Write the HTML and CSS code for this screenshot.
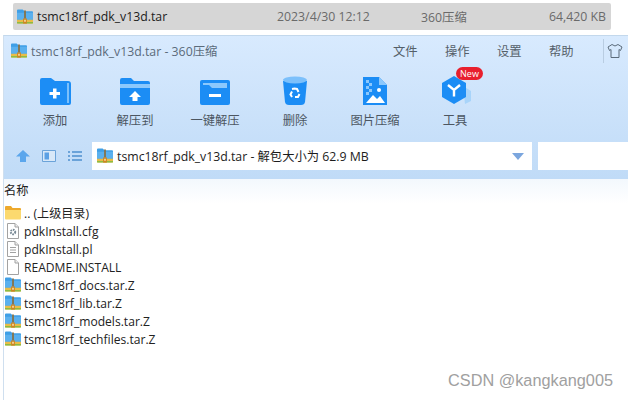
FILE: index.html
```html
<!DOCTYPE html>
<html lang="zh">
<head>
<meta charset="utf-8">
<title>360压缩</title>
<link rel="stylesheet" href="styles.css">
</head>
<body>
<svg class="defs" width="0" height="0">
  <symbol id="arc" viewBox="0 0 17 17">
    <path d="M0 1.500Q0 .5 1 .5H6L8 2.500H16Q17 2.500 17 3.500V13H0Z" fill="#3f9fe6"/>
    <path d="M0 4H17V11.500H0Z" fill="#5ab0ee"/>
    <path d="M0 11.500H17V14.500Q17 15.500 16 15.500H1Q0 15.500 0 14.500Z" fill="#e8bc48"/>
    <path d="M0 13.800H17V14.500Q17 15.500 16 15.500H1Q0 15.500 0 14.500Z" fill="#8cbc44"/>
    <path d="M7.500 1.500H9.500V10H7.500Z" fill="#85754f"/>
    <path d="M6.500 10H10.500V15.500H6.500Z" fill="#cf8420"/>
    <path d="M7.800 11.500H9.200V13.500H7.800Z" fill="#fff3c8"/>
  </symbol>
  <symbol id="doc" viewBox="0 0 16 16">
    <path d="M2.500.5H10L13.500 4V15.500H2.500Z" fill="#fff" stroke="#a2a2a2"/>
    <path d="M10 .5V4H13.500" fill="#eee" stroke="#a2a2a2"/>
  </symbol>
</svg>

<div class="selected">
  <svg class="ic16"><use href="#arc"/></svg>
  <span class="sel-name">tsmc18rf_pdk_v13d.tar</span>
  <span class="sel-date">2023/4/30 12:12</span>
  <span class="sel-type">360压缩</span>
  <span class="sel-size">64,420 KB</span>
</div>

<main class="window">
  <header class="head">
    <div class="titlebar">
      <svg class="ic16"><use href="#arc"/></svg>
      <span class="title">tsmc18rf_pdk_v13d.tar - 360压缩</span>
      <nav class="menu">
        <span class="menu-item">文件</span>
        <span class="menu-item">操作</span>
        <span class="menu-item">设置</span>
        <span class="menu-item">帮助</span>
      </nav>
      <span class="sep"></span>
      <svg class="shirt" viewBox="0 0 16 16"><path d="M5 1.500 1 4l1.500 3.500L4 6.500V14.500H12V6.500L13.500 7.500 15 4 11 1.500Q8 4.500 5 1.500Z" fill="none" stroke="#5b6b7b"/></svg>
    </div>
    <div class="tools">
      <div class="tool">
        <svg class="tool-ic" viewBox="0 0 32 30"><path d="M1 3Q1 1 3 1H12L16 4H29Q32 4 32 7V26Q32 28 30 28H3Q1 28 1 26Z" fill="#1c8df5"/><path d="M28 6H30V26H28Z" fill="#7cc0fb"/><path d="M14 11.500H17.500V15H21V18H17.500V21.500H14V18H10.500V15H14Z" fill="#fff"/></svg>
        <span class="tool-label">添加</span>
      </div>
      <div class="tool">
        <svg class="tool-ic" viewBox="0 0 32 30"><path d="M1 3Q1 1 3 1H12L15 4H29Q31 4 31 6V26Q31 28 29 28H3Q1 28 1 26Z" fill="#1c8df5"/><path d="M1 7H31V11H1Z" fill="#8cc8fc"/><path d="M16 14 22 20H18.500V24H13.500V20H10Z" fill="#fff"/></svg>
        <span class="tool-label">解压到</span>
      </div>
      <div class="tool">
        <svg class="tool-ic" viewBox="0 0 32 30"><path d="M1 5Q1 3 3 3H29Q31 3 31 5V26Q31 28 29 28H3Q1 28 1 26Z" fill="#1c8df5"/><path d="M4 6H28V11H13L10 8H4Z" fill="#8cc8fc"/><path d="M10 17H22V20H10Z" fill="#fff"/></svg>
        <span class="tool-label">一键解压</span>
      </div>
      <div class="tool">
        <svg class="tool-ic" viewBox="0 0 32 30"><path d="M4 4H28L26 25Q25.500 28 22 28H10Q6.500 28 6 25Z" fill="#1c8df5"/><ellipse cx="16" cy="3" rx="12" ry="3.500" fill="#7cc0fb"/><path d="M13 12 15.500 11.500 18 12 19.500 15M20.500 17 19 20H16M13 20 11.500 17.500 13 14.500" fill="none" stroke="#fff" stroke-width="2"/></svg>
        <span class="tool-label">删除</span>
      </div>
      <div class="tool">
        <svg class="tool-ic" viewBox="0 0 32 30"><path d="M4 0H20L28 8V28H4Z" fill="#1c8df5"/><path d="M20 0 28 8H20Z" fill="#8cc8fc"/><path d="M7 3H10V6H7ZM10 6H13V9H10ZM7 9H10V12H7ZM10 12H13V15H10ZM7 15H10V18H7Z" fill="#8cc8fc"/><circle cx="20" cy="13" r="2" fill="#fff"/><path d="M7 26 14 18 18 22 21 19 26 26Z" fill="#fff"/></svg>
        <span class="tool-label">图片压缩</span>
      </div>
      <div class="tool">
        <span class="tool-badge-wrap">
          <svg class="tool-ic" viewBox="0 0 32 30"><path d="M24 9 32 14V24L26 27Z" fill="#a8d4fa"/><path d="M15 -1 27 6V20L15 27 3 20V6Z" fill="#1c8df5"/><path d="M9 8 15 13 21 8M15 13V19.500" fill="none" stroke="#fff" stroke-width="2.400"/></svg>
          <span class="badge">New</span>
        </span>
        <span class="tool-label">工具</span>
      </div>
    </div>
    <div class="navbar">
      <svg class="nav-ic" viewBox="0 0 14 14"><path d="M7 1 14 7.500H10V13H4V7.500H0Z" fill="#5ba6ec"/></svg>
      <svg class="nav-ic" viewBox="0 0 14 14"><path d="M.5 1.500H13.500V12.500H.5Z" fill="#d8e8f8" stroke="#6ba3d9"/><path d="M2.500 3.500H7V10.500H2.500Z" fill="#5ba0e4"/></svg>
      <svg class="nav-ic" viewBox="0 0 14 14"><path d="M0 2H2V4H0ZM4 2H14V4H4ZM0 6H2V8H0ZM4 6H14V8H4ZM0 10H2V12H0ZM4 10H14V12H4Z" fill="#6ba3d9"/></svg>
      <div class="address">
        <svg class="ic16"><use href="#arc"/></svg>
        <span class="addr-text">tsmc18rf_pdk_v13d.tar - 解包大小为 62.9 MB</span>
        <span class="caret"></span>
      </div>
      <div class="search"></div>
    </div>
  </header>
  <div class="colhead">名称</div>
  <ul class="files">
    <li class="file">
      <svg class="ic16" viewBox="0 0 16 16"><path d="M0 2Q0 1 1 1H6L7.500 3H15Q16 3 16 4V6H0Z" fill="#eda92c"/><path d="M0 5H16V13.500Q16 14.500 15 14.500H1Q0 14.500 0 13.500Z" fill="#fbd96f"/></svg>
      <span>.. (上级目录)</span>
    </li>
    <li class="file">
      <svg class="ic16" viewBox="0 0 16 16"><use href="#doc" width="16" height="16"/><circle cx="8" cy="9" r="2.200" fill="none" stroke="#7a8a96" stroke-width="2" stroke-dasharray="1.500 .8"/></svg>
      <span>pdkInstall.cfg</span>
    </li>
    <li class="file">
      <svg class="ic16" viewBox="0 0 16 16"><use href="#doc" width="16" height="16"/><path d="M5 6.500H11M5 9H11M5 11.500H11" stroke="#a2a2a2"/></svg>
      <span>pdkInstall.pl</span>
    </li>
    <li class="file"><svg class="ic16"><use href="#doc"/></svg><span>README.INSTALL</span></li>
    <li class="file"><svg class="ic16"><use href="#arc"/></svg><span>tsmc18rf_docs.tar.Z</span></li>
    <li class="file"><svg class="ic16"><use href="#arc"/></svg><span>tsmc18rf_lib.tar.Z</span></li>
    <li class="file"><svg class="ic16"><use href="#arc"/></svg><span>tsmc18rf_models.tar.Z</span></li>
    <li class="file"><svg class="ic16"><use href="#arc"/></svg><span>tsmc18rf_techfiles.tar.Z</span></li>
  </ul>
</main>
<div class="watermark">CSDN @kangkang005</div>
</body>
</html>
```
FILE: styles.css
```css
* { box-sizing: border-box; }
html, body { margin: 0; height: 400px; overflow: hidden; }
body {
  background: #fff;
  color: #222;
  font-family: "Open Sans", "Noto Sans CJK SC", sans-serif;
  font-size: 12.3px;
  position: relative;
  padding-top: 3px;
}
.defs { position: absolute; }
.ic16 { width: 16px; height: 16px; flex: none; }

.selected {
  height: 27px;
  margin: 0 17px 0 13px;
  background: #d6d6d6;
  border-radius: 2px;
  display: flex;
  align-items: center;
  padding-left: 4px;
}
.sel-name { margin-left: 4px; width: 240px; color: #1c1c1c; }
.sel-date { width: 144px; color: #6a6a6a; }
.sel-type { width: 80px; color: #6a6a6a; }
.sel-size { width: 105px; text-align: right; color: #6a6a6a; }

.window {
  margin: 5px 0 0 3px;
  height: 365px;
  border-left: 1px solid #cfdfef;
  border-top: 1px solid #c3d8ec;
}
.head {
  height: 143px;
  background: linear-gradient(#d8eafe, #c0dbf7);
}
.titlebar {
  height: 30px;
  display: flex;
  align-items: center;
  padding-left: 7px;
  color: #5b6b7b;
}
.title { margin-left: 4px; }
.menu { margin-left: auto; display: flex; gap: 28px; color: #555f69; }
.menu-item { width: 24px; white-space: nowrap; }
.sep { width: 1px; height: 24px; background: #b9cde2; margin: 0 3px 0 30px; }
.shirt { width: 16px; height: 16px; margin-right: 5px; flex: none; }

.tools { display: flex; padding: 11px 0 0 11px; height: 76px; }
.tool {
  width: 80px;
  display: flex;
  flex-direction: column;
  align-items: center;
  color: #4c5661;
}
.tool-ic { width: 32px; height: 30px; display: block; overflow: visible; }
.tool-badge-wrap { position: relative; display: block; }
.tool-label { margin-top: 4px; white-space: nowrap; line-height: 20px; }
.badge {
  position: absolute;
  left: 17px;
  top: -10px;
  width: 27px;
  height: 13px;
  border-radius: 7px;
  background: #e8202e;
  color: #fff;
  font-size: 9px;
  line-height: 13px;
  text-align: center;
}

.navbar { display: flex; align-items: flex-start; padding-left: 12px; }
.nav-ic { width: 14px; height: 14px; margin: 7px 12px 0 0; flex: none; }
.nav-ic:nth-child(3) { margin-right: 10px; }
.address {
  width: 440px;
  height: 28px;
  background: #fff;
  display: flex;
  align-items: center;
  padding-left: 5px;
  gap: 4px;
  color: #1c1c1c;
}
.caret {
  margin-left: auto;
  margin-right: 8px;
  border-left: 6px solid transparent;
  border-right: 6px solid transparent;
  border-top: 7px solid #7ba6de;
}
.search { flex: 1; height: 28px; margin-left: 6px; background: #fff; }

.colhead {
  height: 25px;
  padding-top: 4px;
  background: linear-gradient(#f3f8fd, #fff);
  line-height: 16px;
}
.files { list-style: none; margin: 0; padding: 0; font-size: 12.1px; }
.file {
  height: 18px;
  display: flex;
  align-items: center;
  gap: 3px;
  padding-left: 1px;
}
.watermark {
  position: absolute;
  right: 15px;
  top: 371px;
  color: #a0a0a0;
  font-size: 16.3px;
  font-family: "Liberation Sans", sans-serif;
}
```
